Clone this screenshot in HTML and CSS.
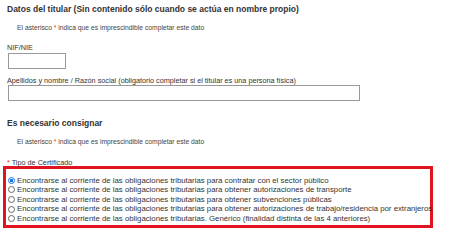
FILE: index.html
```html
<!DOCTYPE html>
<html lang="es">
<head>
    <meta charset="UTF-8">
    <title>Solicitud de certificado</title>
    <link rel="stylesheet" href="styles.css">
</head>
<body>

    <h2 class="section-title">Datos del titular (Sin contenido sólo cuando se actúa en nombre propio)</h2>
    <p class="note">El asterisco <span class="req">*</span> indica que es imprescindible completar este dato</p>

    <div class="field">
        <label for="nif">NIF/NIE</label>
        <input type="text" id="nif" class="input-short">
    </div>

    <div class="field">
        <label for="nombre">Apellidos y nombre / Razón social (obligatorio completar si el titular es una persona física)</label>
        <input type="text" id="nombre" class="input-long">
    </div>

    <h2 class="section-title second">Es necesario consignar</h2>
    <p class="note">El asterisco <span class="req">*</span> indica que es imprescindible completar este dato</p>

    <div class="field tipo">
        <label><span class="req">*</span> Tipo de Certificado</label>
        <div class="options">
            <label class="option"><input type="radio" name="tipo" checked> Encontrarse al corriente de las obligaciones tributarias para contratar con el sector público</label>
            <label class="option"><input type="radio" name="tipo"> Encontrarse al corriente de las obligaciones tributarias para obtener autorizaciones de transporte</label>
            <label class="option"><input type="radio" name="tipo"> Encontrarse al corriente de las obligaciones tributarias para obtener subvenciones públicas</label>
            <label class="option"><input type="radio" name="tipo"> Encontrarse al corriente de las obligaciones tributarias para obtener autorizaciones de trabajo/residencia por extranjeros</label>
            <label class="option"><input type="radio" name="tipo"> Encontrarse al corriente de las obligaciones tributarias. Genérico (finalidad distinta de las 4 anteriores)</label>
        </div>
    </div>

</body>
</html>
```

FILE: styles.css
```css
body {
    margin: 0;
    padding: 3px 0 0 7px;
    font-family: "Liberation Sans", Arial, sans-serif;
    color: #333;
    background-color: #fff;
}

.section-title {
    font-size: 8.5px;
    font-weight: bold;
    margin: 0;
    line-height: 12px;
}

.section-title.second {
    margin-top: 16px;
}

.note {
    font-size: 6.75px;
    color: #444;
    margin: 8px 0 0 10px;
    line-height: 9px;
}

.req {
    color: #e32;
}

.field {
    margin-top: 11px;
    font-size: 7.25px;
}

.field + .field {
    margin-top: 7px;
}

.field > label {
    display: block;
    line-height: 9.5px;
}

.field.tipo {
    margin-top: 12px;
}

input[type="text"] {
    display: block;
    height: 16px;
    box-sizing: border-box;
    border: 1px solid #999;
    margin: 0 0 0 1px;
    padding: 0;
}

.input-short {
    width: 58px;
}

.input-long {
    width: 352px;
}

.options {
    margin: -2px 0 0 -4px;
    width: 430px;
    box-sizing: border-box;
    border: 3px solid #e0141e;
    padding: 7px 0 2px 2px;
}

.option {
    display: flex;
    align-items: center;
    gap: 2px;
    font-size: 7.8px;
    line-height: 9.6px;
    white-space: nowrap;
}

.option input {
    appearance: none;
    flex-shrink: 0;
    width: 7px;
    height: 7px;
    margin: 0;
    border: 1px solid #666;
    border-radius: 50%;
    background: #fff;
}

.option input:checked {
    border-color: #1a73e8;
    background: radial-gradient(circle, #1a73e8 45%, #fff 55%);
}
```
